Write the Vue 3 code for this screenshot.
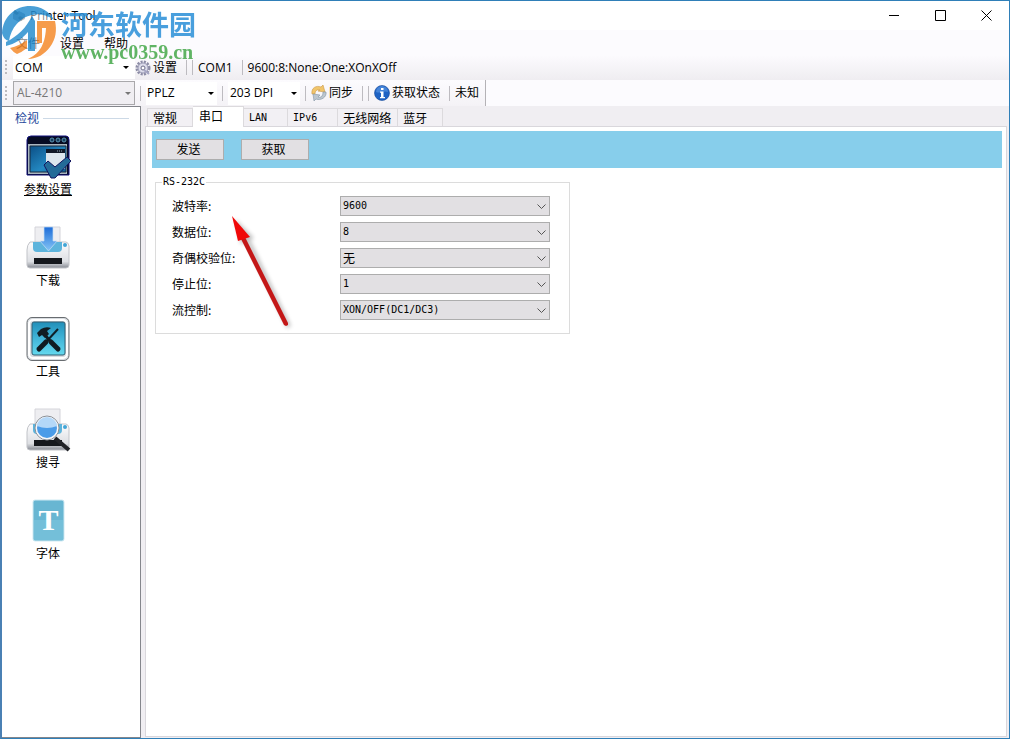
<template>
    <div class="window">
        <header class="title-bar">
            <svg class="app-icon" viewBox="0 0 16 16">
                <path d="M2 6l6-3 6 3v5l-6 3-6-3z" fill="#7b8790" />
                <path d="M4 2l4 3-2 2-4-2zM9 8l4 2-3 3-3-3z" fill="#333c42" />
            </svg>
            <h1 class="title">Printer Tool</h1>
            <div class="window-buttons">
                <button type="button" aria-label="最小化">
                    <svg viewBox="0 0 11 11"><path d="M0 5.5h10" /></svg>
                </button>
                <button type="button" aria-label="最大化">
                    <svg viewBox="0 0 11 11"><path d="M.5.5h10v10h-10z" /></svg>
                </button>
                <button type="button" aria-label="关闭">
                    <svg viewBox="0 0 11 11"><path d="M.5.5l10 10M10.5.5l-10 10" /></svg>
                </button>
            </div>
        </header>

        <div class="bars">
            <nav class="menu">
                <button v-for="name in menus" :key="name" type="button">{{ name }}</button>
            </nav>
            <div class="toolbar">
                <span class="grip"></span>
                <span class="combo combo-port">
                    <select aria-label="端口类型"><option>COM</option></select>
                    <svg viewBox="0 0 6 3"><path d="M0 0h6L3 3z" /></svg>
                </span>
                <button type="button" class="tool">
                    <svg viewBox="0 0 16 16">
                        <circle cx="8" cy="8" r="6" fill="none" stroke="#8d8da6" stroke-width="3" stroke-dasharray="2 1.15" />
                        <circle cx="8" cy="8" r="5" fill="#dcdcea" stroke="#9c9cb6" />
                        <circle cx="8" cy="8" r="2" fill="#fff" stroke="#6d6d88" />
                        <path d="M9 10l5 4" stroke="#a7a7c4" stroke-width="2" />
                    </svg>
                    设置
                </button>
                <span class="sep sep-wide"></span>
                <span class="sep"></span>
                <span>COM1</span>
                <span class="sep sep-wide"></span>
                <span>9600:8:None:One:XOnXOff</span>
            </div>
        </div>

        <div class="toolbar-row">
            <div class="toolbar toolbar-printer">
                <span class="grip"></span>
                <span class="combo combo-model">
                    <select aria-label="打印机型号" disabled><option>AL-4210</option></select>
                    <svg viewBox="0 0 6 3"><path d="M0 0h6L3 3z" /></svg>
                </span>
                <span class="sep"></span>
                <span class="combo combo-lang">
                    <select aria-label="语言"><option>PPLZ</option></select>
                    <svg viewBox="0 0 6 3"><path d="M0 0h6L3 3z" /></svg>
                </span>
                <span class="sep"></span>
                <span class="combo combo-dpi">
                    <select aria-label="分辨率"><option>203 DPI</option></select>
                    <svg viewBox="0 0 6 3"><path d="M0 0h6L3 3z" /></svg>
                </span>
                <span class="sep"></span>
                <button type="button" class="tool">
                    <svg viewBox="0 0 16 16">
                        <path d="M1 9C0 3 5 0 10 2l2-2 2 7-7-1 2-1C6 4 4 6 4 9z" fill="#f1c56b" stroke="#c99745" stroke-width=".6" />
                        <path d="M15 7c1 5-5 9-10 7l-2 2-1-7 7 1-2 2c3 1 5-1 5-5z" fill="#bcc6cf" stroke="#8294a3" stroke-width=".6" />
                    </svg>
                    同步
                </button>
                <span class="sep sep-wide"></span>
                <span class="sep"></span>
                <button type="button" class="tool">
                    <svg viewBox="0 0 16 16">
                        <circle cx="8" cy="8" r="7.5" fill="#1f63c4" stroke="#174a98" stroke-width=".6" />
                        <path d="M2 7a6 6 0 0 1 12 0C10 5 6 9 2 7z" fill="#4584d8" />
                        <path d="M7 3h2.500v2H7zM6 6.500h3.500V12H11v1.200H6V12h1V7.700H6z" fill="#fff" />
                    </svg>
                    获取状态
                </button>
                <span class="sep sep-wide"></span>
                <span>未知</span>
            </div>
        </div>

        <div class="body">
            <aside class="sidebar">
                <h2>检视</h2>
                <a
                    v-for="item in views"
                    :key="item.id"
                    href="#"
                    class="view"
                    :class="{ active: item.id === 'params' }"
                >
                    <svg v-if="item.id === 'params'" viewBox="-1 0 46 46">
                        <defs>
                            <linearGradient id="g-win" x1="0" y1="0" x2="1" y2="1">
                                <stop offset="0" stop-color="#0b4f86" />
                                <stop offset=".6" stop-color="#2489c2" />
                                <stop offset="1" stop-color="#0d5c96" />
                            </linearGradient>
                        </defs>
                        <path d="M1 5q0-4 4-4h35q3 0 3 4v35H1z" fill="#060b22" stroke="#10107c" />
                        <path d="M2 9h39v30H2z" fill="#a9b6c0" />
                        <path d="M4 11h36v26H4z" fill="url(#g-win)" stroke="#172a3c" />
                        <path d="M20 14h19v20H20z" fill="#dce6ed" />
                        <path d="M20 14h19v4H20z" fill="#101827" />
                        <path d="M31 16h6" stroke="#8fa3b3" stroke-dasharray="1 1" />
                        <circle v-for="x in [26, 32, 38]" :key="x" :cx="x" cy="5" r="2" fill="#153d5b" stroke="#5a93b2" />
                        <path d="M18 30l4-4 7 6 12-10 4 4-16 17h-4z" fill="#236b98" stroke="#12155e" />
                    </svg>
                    <svg v-else-if="item.id === 'download' || item.id === 'search'" viewBox="-1 0 46 46">
                        <defs>
                            <linearGradient id="g-body" x1="0" y1="0" x2="0" y2="1">
                                <stop offset="0" stop-color="#fdfdfe" />
                                <stop offset=".75" stop-color="#dddfe3" />
                                <stop offset="1" stop-color="#878b93" />
                            </linearGradient>
                            <linearGradient id="g-blue" x1="0" y1="0" x2="0" y2="1">
                                <stop offset="0" stop-color="#1d6cd8" />
                                <stop offset="1" stop-color="#85c5f6" />
                            </linearGradient>
                        </defs>
                        <path d="M9 1h25v18H9z" fill="#eeeef1" stroke="#d4d4da" />
                        <path d="M4 16h36q2 0 3 4v19q0 3-3 3H4q-3 0-3-3V24q0-5 3-8z" fill="url(#g-body)" stroke="#c1c3c8" />
                        <path d="M7 16h29v6q0 4-4 4H11q-4 0-4-4z" fill="#5db4dc" />
                        <path d="M8 32h28v6H8z" fill="#15181d" />
                        <circle cx="39" cy="19" r="2" fill="#42a5d6" />
                        <path v-if="item.id === 'download'" d="M18 1h9v14h4L22.500 25 14 15h4z" fill="url(#g-blue)" stroke="#c4def5" stroke-width=".7" />
                        <template v-else>
                            <path d="M29 30l14 12" stroke="#202227" stroke-width="4" />
                            <circle cx="21" cy="20" r="11" fill="#4b9ce8" stroke="#f7f8fa" stroke-width="2" />
                            <circle cx="21" cy="20" r="12" fill="none" stroke="#8b9198" />
                            <path d="M11 18a10 9 0 0 1 20 0q-10 4-20 0z" fill="#b4d8f8" />
                        </template>
                    </svg>
                    <svg v-else-if="item.id === 'tools'" viewBox="-1 0 46 46">
                        <defs>
                            <linearGradient id="g-tools" x1="0" y1="0" x2="0" y2="1">
                                <stop offset="0" stop-color="#218fb9" />
                                <stop offset=".5" stop-color="#42b5d8" />
                                <stop offset="1" stop-color="#64d9ee" />
                            </linearGradient>
                        </defs>
                        <rect x="1" y="0.500" width="42" height="43" rx="5" fill="#d8dce0" stroke="#686c70" />
                        <rect x="3" y="3" width="38" height="38" rx="4" fill="none" stroke="#fff" stroke-width="2" />
                        <rect x="6" y="5" width="33" height="33" rx="2" fill="url(#g-tools)" stroke="#315e73" />
                        <path d="M32 12L20 25" stroke="#0f2029" stroke-width="2" />
                        <path d="M20 25l-7 7" stroke="#0f1a20" stroke-width="5" stroke-linecap="round" />
                        <path d="M19 18l5 6" stroke="#101c22" stroke-width="3" />
                        <path d="M25 25l7 7" stroke="#101c22" stroke-width="5" stroke-linecap="round" />
                        <path d="M11 16l4-4q5-3 10-1l-4 3 2 3-4 4-3-3-3 2z" fill="#111d24" />
                    </svg>
                    <svg v-else viewBox="-1 0 46 46">
                        <rect x="7" y="1" width="31" height="41" rx="2" fill="#68b6d2" stroke="#cfeaf3" />
                        <path d="M8 21h29v20H8z" fill="#74bfd9" />
                        <text x="22.500" y="31" text-anchor="middle" class="font-letter">T</text>
                    </svg>
                    <span>{{ item.label }}</span>
                </a>
            </aside>

            <main class="content">
                <div class="tabs" role="tablist">
                    <button
                        v-for="tab in tabs"
                        :key="tab"
                        type="button"
                        role="tab"
                        :aria-selected="tab === activeTab"
                        :class="{ active: tab === activeTab, latin: /^[A-Z]/.test(tab) }"
                        @click="activeTab = tab"
                    >
                        {{ tab }}
                    </button>
                </div>
                <section class="panel">
                    <div class="actions">
                        <button type="button">发送</button>
                        <button type="button">获取</button>
                    </div>
                    <fieldset>
                        <legend>RS-232C</legend>
                        <div v-for="field in fields" :key="field.id" class="field">
                            <label :for="field.id">{{ field.label }}:</label>
                            <span class="drop">
                                <select :id="field.id" :class="{ cjk: field.value === '无' }">
                                    <option>{{ field.value }}</option>
                                </select>
                                <svg viewBox="0 0 9 5"><path d="M.5.5l4 4 4-4" /></svg>
                            </span>
                        </div>
                    </fieldset>
                </section>
            </main>
        </div>

        <div class="watermark">
            <svg viewBox="0 0 56 56">
                <circle cx="28" cy="29" r="25" fill="#fff" opacity=".6" />
                <path d="M1 28C2 11 15 1 29 1c11 0 20 6 24 14-7-5-14-7-22-5C19 12 10 23 8 36c-4-1-6-4-7-8z" fill="#2a8fd0" />
                <path d="M5 37C17 31 25 23 31 11l3 5v30h-7V27C21 34 14 39 5 41z" fill="#2a8fd0" />
                <path d="M9 43q9-2 17-8v8q-5 4-10 6-4-2-7-6z" fill="#f58b2c" />
                <path d="M36 16h18c2 9 1 18-5 26-5 7-13 12-22 12 10-5 17-12 18-31h-4v15h-5z" fill="#f58b2c" />
            </svg>
            <div>
                <strong>河东软件园</strong>
                <span>www.pc0359.cn</span>
            </div>
        </div>

        <svg class="arrow" viewBox="0 0 70 120">
            <path d="M6 5l6 25 5-2 41 86 4-2-41-86 4-2z" class="arrow-shadow" />
            <path d="M12 25l43 86 2 1 2-1v-2L16 23z" fill="#c41818" />
            <path d="M3 2l6 25 6-2 6-2z" fill="#f00808" />
        </svg>
    </div>
</template>

<script setup>
import { ref } from "vue";

const menus = ["文件", "设置", "帮助"];

const views = [
    { id: "params", label: "参数设置" },
    { id: "download", label: "下载" },
    { id: "tools", label: "工具" },
    { id: "search", label: "搜寻" },
    { id: "font", label: "字体" },
];

const tabs = ["常规", "串口", "LAN", "IPv6", "无线网络", "蓝牙"];
const activeTab = ref("串口");

const fields = [
    { id: "baud", label: "波特率", value: "9600" },
    { id: "data", label: "数据位", value: "8" },
    { id: "parity", label: "奇偶校验位", value: "无" },
    { id: "stop", label: "停止位", value: "1" },
    { id: "flow", label: "流控制", value: "XON/OFF(DC1/DC3)" },
];
</script>

<style>
body {
    margin: 0;
}
</style>

<style scoped>
* {
    box-sizing: border-box;
}

.window {
    position: relative;
    display: flex;
    flex-direction: column;
    min-height: 100vh;
    border: 1px solid #2f7fb8;
    border-left: 2px solid #4a80b4;
    background: #fff;
    color: #000;
    font: 12px/16px "Open Sans", "Noto Sans CJK SC", sans-serif;
}

button,
select {
    margin: 0;
    padding: 0;
    border: 0;
    border-radius: 0;
    background: none;
    color: inherit;
    font: inherit;
}

select {
    appearance: none;
    opacity: 1;
}

.title-bar {
    display: flex;
    align-items: center;
    height: 29px;
    padding-left: 9px;
}

.app-icon {
    width: 16px;
    height: 16px;
}

.title {
    flex: 1;
    margin: 0 0 0 3px;
    font-size: 12px;
    font-weight: 400;
}

.window-buttons {
    display: flex;
    height: 100%;
}

.window-buttons button {
    display: flex;
    align-items: center;
    justify-content: center;
    width: 46px;
}

.window-buttons svg {
    width: 11px;
    height: 11px;
    fill: none;
    stroke: #000;
}

.bars {
    background: linear-gradient(#fcfbfe 50%, #efedf1);
}

.menu {
    display: flex;
    height: 25px;
    padding: 2px 0 0 14px;
    gap: 20px;
}

.toolbar {
    display: flex;
    align-items: center;
    height: 25px;
    padding-left: 3px;
}

.toolbar-row {
    background: #fcfbfe;
}

.toolbar-printer {
    width: fit-content;
    height: 26px;
    padding-right: 6px;
    border-right: 1px solid #b4b2b6;
    background: linear-gradient(#fcfbfe, #f4f2f6);
}

.grip {
    width: 2px;
    height: 15px;
    margin-right: 6px;
    background: repeating-linear-gradient(#bcbabe 0 2px, transparent 2px 4px);
}

.sep {
    width: 1px;
    height: 15px;
    margin: 0 5px;
    background: #bdbbc0;
}

.sep-wide {
    margin-left: 9px;
}

.sep-wide + .sep {
    margin-left: 0;
}

.tool {
    display: flex;
    align-items: center;
    gap: 2px;
}

.tool svg {
    width: 16px;
    height: 16px;
}

.combo {
    display: grid;
    align-items: center;
    height: 23px;
    background: #fff;
}

.combo select,
.combo svg,
.drop select,
.drop svg {
    grid-area: 1 / 1;
}

.combo select {
    width: 100%;
    height: 100%;
    padding-left: 2px;
}

.combo svg {
    justify-self: end;
    width: 6px;
    height: 3px;
    margin-right: 4px;
    pointer-events: none;
}

.combo-port {
    width: 122px;
}

.combo-port svg {
    margin-right: 6px;
}

.combo-model {
    width: 122px;
    height: 24px;
    border: 1px solid #a9a8ab;
    background: #f0eef2;
    color: #777;
}

.combo-model select {
    padding-left: 3px;
}

.combo-model svg {
    margin-right: 3px;
    fill: #777;
}

.combo-lang {
    width: 71px;
}

.combo-lang select {
    padding-left: 1px;
}

.combo-lang svg {
    margin-right: 3px;
}

.combo-dpi {
    width: 72px;
}

.combo-dpi svg {
    margin-right: 3px;
}

.body {
    display: flex;
    flex: 1;
    background: #f0eef2;
}

.sidebar {
    width: 139px;
    border: 1px solid #84868c;
    border-left: 0;
    background: #fff;
    font-family: "Noto Sans CJK SC", sans-serif;
}

.sidebar h2 {
    display: flex;
    align-items: center;
    gap: 4px;
    height: 22px;
    margin: 0 11px 6px 13px;
    color: #24479b;
    font-size: 12px;
    font-weight: 400;
}

.sidebar h2::after {
    flex: 1;
    height: 1px;
    background: #ccd9e6;
    content: "";
}

.view {
    display: flex;
    flex-direction: column;
    align-items: center;
    width: 92px;
    height: 91px;
    color: #000;
    text-decoration: none;
}

.view svg {
    width: 46px;
    height: 46px;
}

.view.active span {
    text-decoration: underline;
}

.font-letter {
    fill: #fff;
    font: bold 30px "Liberation Serif", serif;
}

.content {
    display: flex;
    flex: 1;
    flex-direction: column;
    margin: 0 2px 1px 4px;
    font-family: "Noto Sans CJK SC", sans-serif;
}

.tabs {
    display: flex;
    align-items: flex-end;
    height: 20px;
    padding-left: 2px;
}

.tabs button {
    height: 18px;
    padding: 0 15px 0 5px;
    border: 1px solid #dcdadd;
    border-width: 1px 1px 0 0;
    background: #f2f0f4;
}

.tabs button:first-child {
    border-left-width: 1px;
}

.tabs button:nth-child(5) {
    padding-right: 6px;
}

.tabs button.active {
    z-index: 1;
    height: 21px;
    margin-bottom: -1px;
    padding: 0 20px 3px 6px;
    background: #fff;
}

.latin,
legend,
.drop select {
    font-family: "DejaVu Sans Mono", monospace;
    font-size: 10px;
}

.tabs .latin {
    padding-right: 20px;
}

.panel {
    flex: 1;
    padding: 4px 4px 4px 6px;
    border: 1px solid #d9d7dc;
    background: #fff;
}

.actions {
    display: flex;
    gap: 17px;
    padding: 8px 4px;
    background: #87ceeb;
}

.actions button {
    width: 68px;
    height: 21px;
    padding: 0 3px 2px 0;
    border: 1px solid #adadad;
    background: #e2e0e3;
}

fieldset {
    width: 415px;
    max-width: 100%;
    margin: 8px 0 0 3px;
    padding: 8px 19px 13px 16px;
    border: 1px solid #dcdcdc;
}

legend {
    margin-left: -10px;
    padding: 0 1px;
    line-height: 12px;
}

.field {
    display: flex;
    align-items: center;
    justify-content: space-between;
    height: 20px;
}

.field + .field {
    margin-top: 6px;
}

.field label {
    line-height: 18px;
}

.drop {
    display: grid;
    align-items: center;
    width: 210px;
    height: 20px;
}

.drop select {
    width: 100%;
    height: 100%;
    padding-left: 2px;
    border: 1px solid #adadad;
    background: #e2e0e3;
}

.drop select.cjk {
    font-family: "Noto Sans CJK SC", sans-serif;
    font-size: 12px;
}

.drop svg {
    justify-self: end;
    width: 9px;
    height: 5px;
    margin-right: 4px;
    fill: none;
    stroke: #555;
    pointer-events: none;
}

.watermark {
    position: absolute;
    top: 4px;
    left: -1px;
    display: flex;
    gap: 4px;
    opacity: 0.85;
    pointer-events: none;
}

.watermark svg {
    width: 56px;
    height: 56px;
}

.watermark strong,
.watermark span {
    display: block;
}

.watermark strong {
    height: 35px;
    color: #2a8fd8;
    font: bold 27px/38px "Noto Sans CJK SC", sans-serif;
}

.watermark span {
    color: #45a84a;
    font: bold 20px/24px "Liberation Serif", serif;
}

.arrow {
    position: absolute;
    top: 213px;
    left: 227px;
    width: 70px;
    height: 120px;
    pointer-events: none;
}

.arrow-shadow {
    fill: #000;
    opacity: 0.25;
    filter: blur(2px);
}
</style>
